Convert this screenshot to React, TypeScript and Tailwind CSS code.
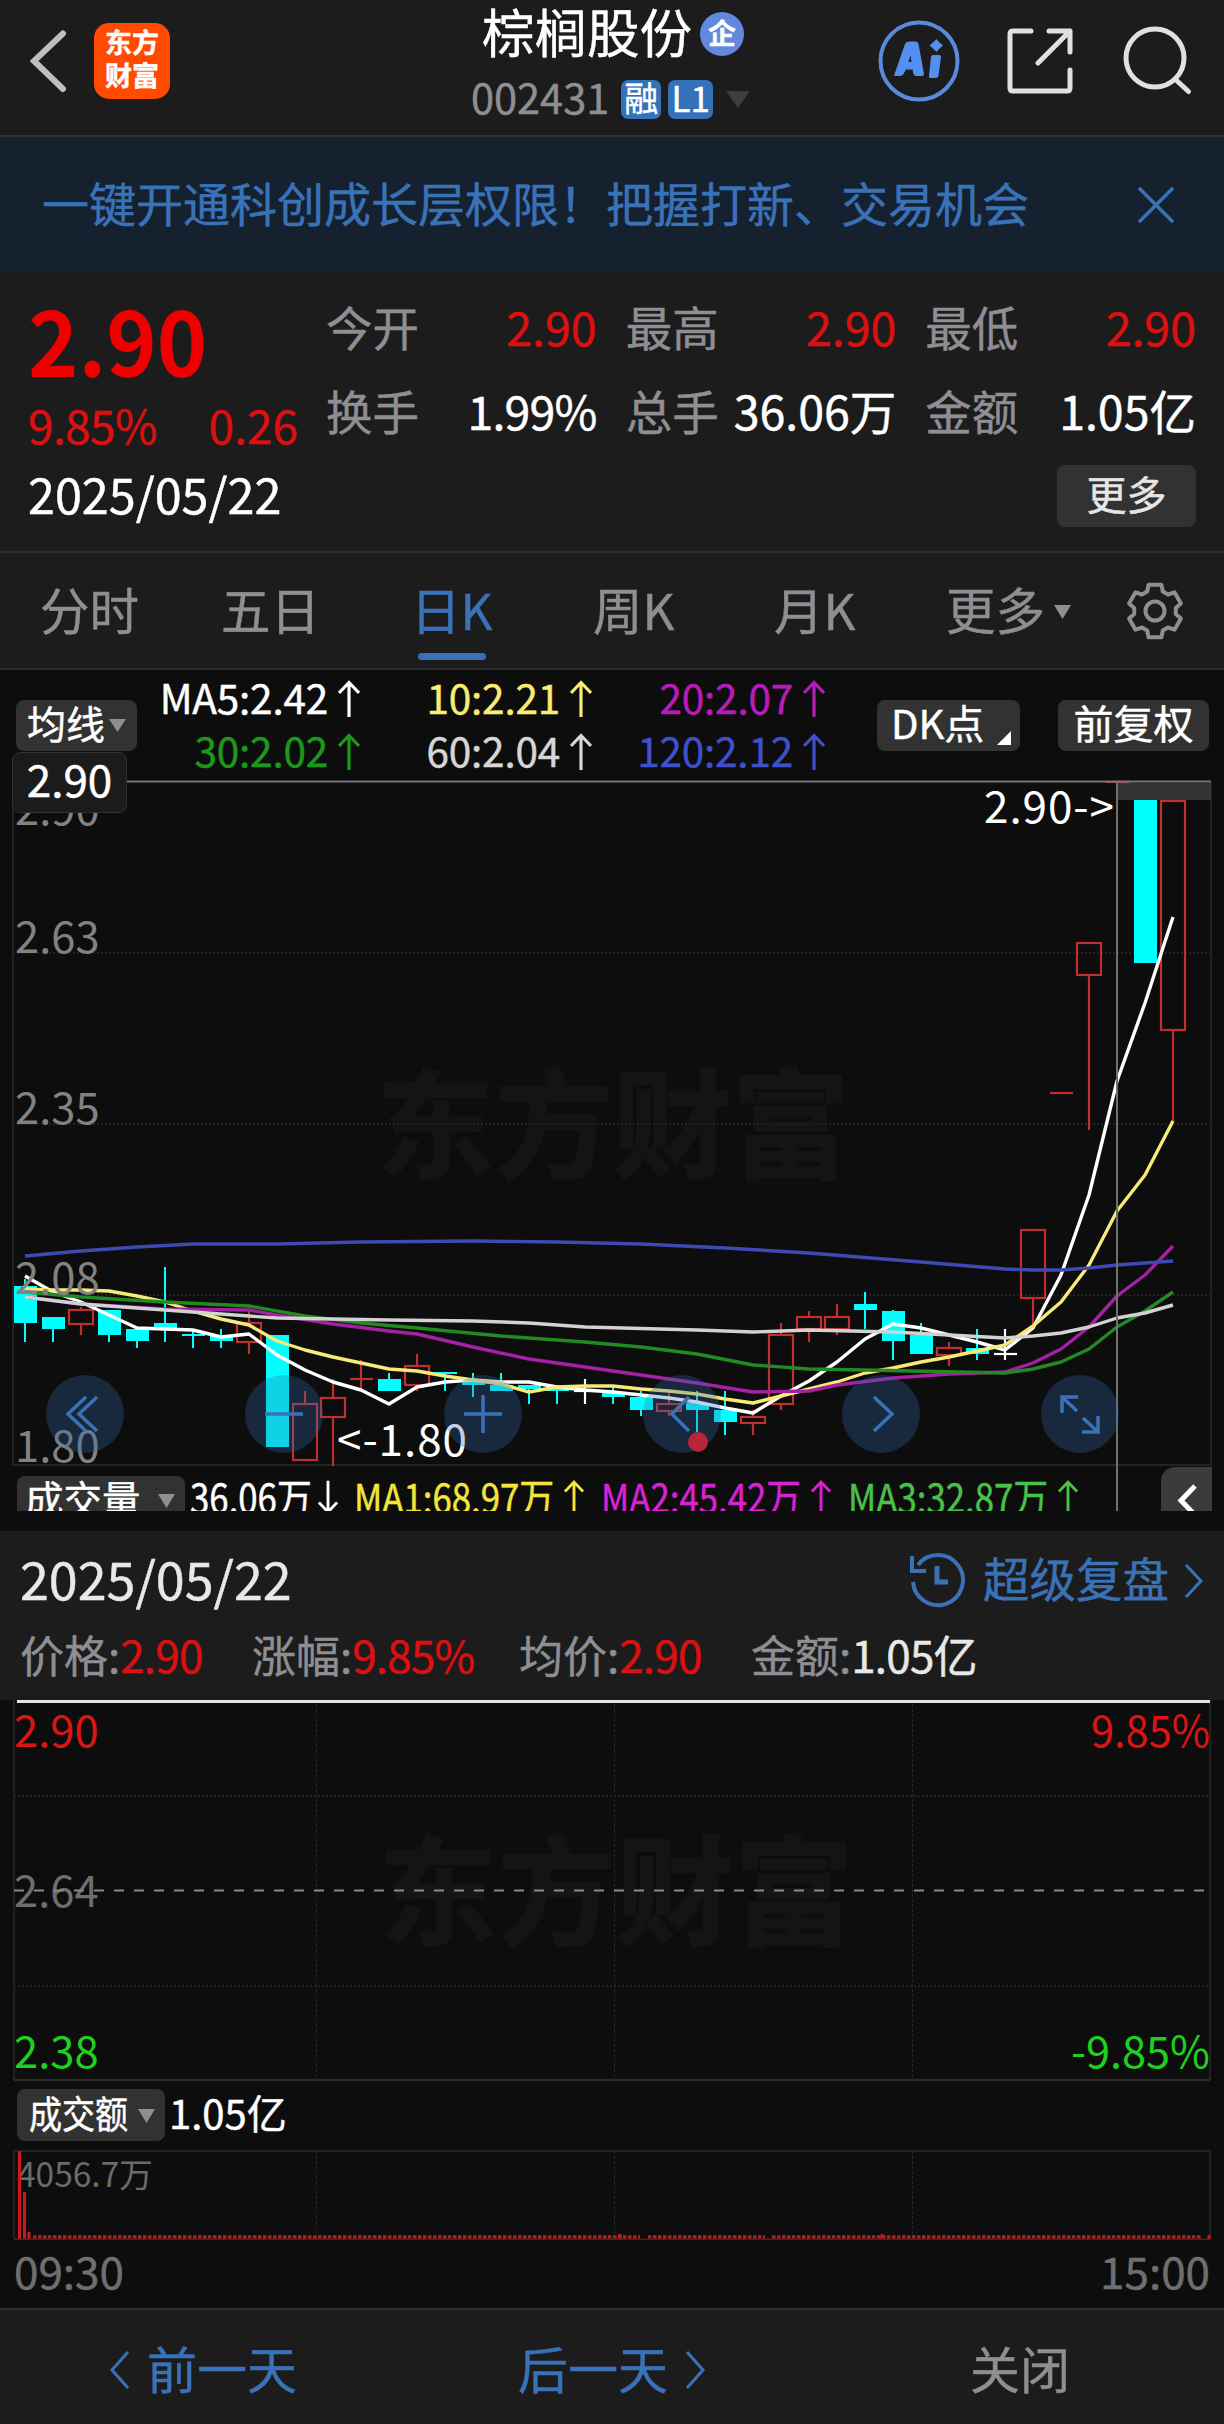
import React from "react";

const UP = "#c03030";
const DOWN = "#00ffff";

type Kind = "up" | "down" | "flat";
// [kind, high, bodyTop, bodyBottom, low]
const CANDLES: [Kind, number, number, number, number][] = [
  ["down", 1279, 1286, 1323, 1342],
  ["down", 1317, 1317, 1329, 1342],
  ["up", 1307, 1310, 1324, 1335],
  ["down", 1310, 1310, 1335, 1342],
  ["down", 1329, 1329, 1341, 1348],
  ["down", 1267, 1323, 1328, 1342],
  ["down", 1329, 1334, 1336, 1348],
  ["down", 1329, 1335, 1341, 1348],
  ["up", 1311, 1323, 1342, 1354],
  ["down", 1335, 1335, 1447, 1447],
  ["up", 1391, 1404, 1460, 1460],
  ["up", 1379, 1398, 1417, 1466],
  ["up", 1360, 1379, 1379, 1390],
  ["down", 1373, 1379, 1391, 1391],
  ["up", 1354, 1366, 1385, 1391],
  ["down", 1372, 1372, 1374, 1391],
  ["down", 1373, 1380, 1385, 1397],
  ["down", 1373, 1385, 1391, 1391],
  ["down", 1385, 1385, 1389, 1404],
  ["down", 1385, 1389, 1391, 1404],
  ["flat", 1379, 1391, 1391, 1404],
  ["down", 1385, 1392, 1397, 1404],
  ["down", 1391, 1397, 1410, 1416],
  ["up", 1391, 1404, 1411, 1416],
  ["down", 1391, 1403, 1410, 1432],
  ["down", 1391, 1410, 1422, 1435],
  ["up", 1410, 1417, 1423, 1435],
  ["up", 1323, 1335, 1404, 1410],
  ["up", 1311, 1317, 1329, 1342],
  ["up", 1304, 1317, 1329, 1335],
  ["down", 1292, 1304, 1310, 1329],
  ["down", 1310, 1311, 1341, 1360],
  ["down", 1323, 1335, 1354, 1354],
  ["up", 1342, 1348, 1355, 1366],
  ["down", 1329, 1348, 1354, 1360],
  ["flat", 1329, 1354, 1354, 1360],
  ["up", 1230, 1230, 1298, 1324],
  ["up", 1093, 1093, 1093, 1093],
  ["up", 943, 943, 975, 1130],
  ["up", 782, 782, 782, 782],
  ["down", 800, 800, 963, 963],
  ["up", 801, 801, 1030, 1121],
];

const cx = (i: number) => 25 + 28 * i;

const MA5 = [1276, 1292, 1302, 1315, 1328, 1329, 1330, 1337, 1334, 1355, 1370, 1382, 1390, 1404, 1387, 1382, 1380, 1382, 1382, 1387, 1390, 1392, 1395, 1398, 1402, 1408, 1413, 1396, 1381, 1362, 1339, 1324, 1328, 1335, 1342, 1350, 1328, 1275, 1195, 1081, 1003, 917].map((y, i) => [i, y]);
const MA10 = [1289, 1290, 1290, 1291, 1296, 1302, 1311, 1319, 1325, 1341, 1350, 1357, 1363, 1369, 1371, 1376, 1380, 1384, 1392, 1387, 1386, 1386, 1389, 1391, 1394, 1399, 1403, 1396, 1389, 1382, 1373, 1368, 1362, 1357, 1351, 1345, 1326, 1302, 1265, 1211, 1175, 1121].map((y, i) => [i, y]);
const MA20 = [[0, 1297], [2, 1304], [5, 1309], [8, 1310], [9, 1315], [11, 1324], [13, 1331], [14, 1334], [16, 1347], [18, 1359], [20, 1367], [22, 1375], [24, 1383], [26, 1392], [28, 1391], [29, 1385], [31, 1378], [33, 1374], [35, 1372], [36, 1363], [37, 1349], [38, 1327], [39, 1296], [40, 1275], [41, 1246]];
const MA30 = [[0, 1292], [2, 1297], [5, 1302], [8, 1306], [10, 1316], [12, 1323], [14, 1328], [17, 1336], [20, 1342], [22, 1347], [24, 1354], [26, 1365], [28, 1369], [30, 1370], [35, 1373], [36, 1369], [37, 1362], [38, 1349], [39, 1327], [40, 1311], [41, 1292]];
const MA60 = [[0, 1297], [2, 1304], [4, 1308], [6, 1312], [8, 1316], [9, 1318], [13, 1320], [16, 1321], [18, 1323], [20, 1327], [24, 1330], [26, 1332], [28, 1330], [31, 1332], [35, 1338], [36, 1336], [37, 1333], [38, 1327], [39, 1318], [40, 1313], [41, 1305]];
const MA120 = [[0, 1256], [2, 1251], [4, 1247], [6, 1244], [9, 1244], [12, 1242], [16, 1241], [19, 1242], [22, 1244], [25, 1248], [28, 1253], [32, 1262], [35, 1269], [36, 1270], [37, 1270], [38, 1268], [39, 1265], [40, 1263], [41, 1261]];

function MaLine({ data, color }: { data: number[][]; color: string }) {
  return (
    <polyline
      points={data.map(([i, y]) => `${cx(i)},${y}`).join(" ")}
      fill="none"
      stroke={color}
      strokeWidth={3.4}
      strokeLinejoin="round"
    />
  );
}

function Candle({ i, c }: { i: number; c: (typeof CANDLES)[number] }) {
  const [kind, high, top, bottom, low] = c;
  const x = cx(i);
  if (kind === "down") {
    return (
      <g fill={DOWN}>
        <rect x={x - 1} y={high} width={2} height={low - high} />
        <rect x={x - 11} y={top} width={23} height={bottom - top} />
      </g>
    );
  }
  const color = kind === "up" ? UP : "#ffffff";
  return (
    <g stroke={color} strokeWidth={2.2} fill="none">
      {high < top && <line x1={x} x2={x} y1={high} y2={top} />}
      {low > bottom && <line x1={x} x2={x} y1={bottom} y2={low} />}
      {bottom - top < 1 ? (
        <line x1={x - 11} x2={x + 12} y1={top} y2={top} />
      ) : (
        <rect x={x - 12} y={top} width={24} height={bottom - top} />
      )}
    </g>
  );
}

function Watermark({ x, y }: { x: number; y: number }) {
  return (
    <text x={x} y={y} fontSize={118} fontWeight={700} fill="#141414" stroke="#141414" strokeWidth={2} textLength={474} lengthAdjust="spacingAndGlyphs">
      东方财富
    </text>
  );
}

function Tri({ w = 16, h = 14, color = "#8f8f93" }: { w?: number; h?: number; color?: string }) {
  return (
    <svg width={w} height={h} viewBox="0 0 16 14" preserveAspectRatio="none" className="shrink-0">
      <path d="M0 0H16L8 14Z" fill={color} />
    </svg>
  );
}

function Arrow({ down = false }: { down?: boolean }) {
  return (
    <svg width="22" height="38" viewBox="0 0 22 38" fill="none" stroke="currentColor" strokeWidth="3.200" className={down ? "rotate-180" : ""}>
      <path d="M11 37V3M1 13L11 2.500L21 13" />
    </svg>
  );
}

function Ma({ text, className }: { text: string; className: string }) {
  return (
    <div className={`flex items-center justify-end gap-[10px] ${className}`}>
      <span className="-mt-1 whitespace-nowrap">{text}</span>
      <Arrow />
    </div>
  );
}

function VolMa({ text, down, className }: { text: string; down?: boolean; className: string }) {
  return (
    <div className={`flex shrink-0 items-start justify-between ${className}`}>
      <span className="mt-[8px] w-0 origin-left scale-x-[.87] whitespace-nowrap text-[40px] leading-[44px]">{text}</span>
      <span className="mt-[13px] block w-5 shrink-0">
        <svg width="20" height="36" viewBox="0 0 22 38" fill="none" stroke="currentColor" strokeWidth="3.200" className={down ? "rotate-180" : ""}>
          <path d="M11 37V3M1 13L11 2.500L21 13" />
        </svg>
      </span>
    </div>
  );
}

function Quote({ label, value, className }: { label: string; value: string; className: string }) {
  return (
    <div className="flex items-center justify-between">
      <span className="text-[46.500px] text-[#8e8e93]">{label}</span>
      <span className={className}>{value}</span>
    </div>
  );
}

function Stat({ label, value, className, color }: { label: string; value: string; className: string; color: string }) {
  return (
    <div className={`whitespace-nowrap ${className}`}>
      <span className="text-[#8e8e93]">{label}:</span>
      <span className={`tracking-[-0.8px] ${color}`}>{value}</span>
    </div>
  );
}

function Control({ children }: { children: React.ReactNode }) {
  return (
    <button className="flex size-[78px] items-center justify-center rounded-full bg-[rgba(50,105,175,0.3)]">
      <svg width="78" height="78" viewBox="-39 -39 78 78" fill="none" stroke="#3a72b8" strokeWidth="3.5">
        {children}
      </svg>
    </button>
  );
}

function gearPath() {
  const pts: string[] = [];
  for (let k = 0; k < 6; k++) {
    const a = (k * Math.PI) / 3 - Math.PI / 2;
    for (const [d, r] of [[-0.38, 21], [-0.24, 27], [0.24, 27], [0.38, 21]]) {
      pts.push(`${(Math.cos(a + d) * r).toFixed(2)} ${(Math.sin(a + d) * r).toFixed(2)}`);
    }
  }
  return `M${pts.join("L")}Z`;
}

function Header() {
  return (
    <header className="flex h-[137px] border-b-2 border-[#2f3233]">
      <svg width="40" height="64" viewBox="0 0 40 64" className="ml-[28px] mt-[29px]" fill="none" stroke="#bfbfbf" strokeWidth="6" strokeLinecap="round">
        <path d="M35 4.500L6 32L35 60" />
      </svg>
      <div className="ml-[26px] mt-[23px] flex size-[76px] flex-col items-center justify-center rounded-[15px] bg-[#ff4a00] pb-[7px] text-[27px] font-bold leading-[33px] text-white">
        <span>东方</span>
        <span>财富</span>
      </div>
      <div className="ml-[301px] flex w-[284px] flex-col">
        <div className="ml-[11px] mt-[3px] flex h-[54px] items-center">
          <span className="-mt-[1px] text-[52.500px] leading-[54px] text-white">棕榈股份</span>
          <span className="ml-[8px] mt-2 flex size-[44px] items-center justify-center rounded-full bg-[#6288e0] pb-[5px] text-[28px] font-bold leading-none text-white">企</span>
        </div>
        <div className="mt-[22px] flex h-[40px] items-center">
          <span className="-mt-1 text-[41.500px] leading-none text-[#8e8e93]">002431</span>
          <span className="ml-[12px] flex h-[39px] w-[40px] items-center justify-center rounded-[7px] bg-[#3571b8] pb-1 text-[34px] leading-none text-white">融</span>
          <span className="ml-[7px] flex h-[39px] w-[45px] items-center justify-center rounded-[7px] bg-[#3571b8] pb-[6px] text-[35px] leading-none text-white">L1</span>
          <span className="ml-[13px]"><Tri w={24} h={17} color="#3e3e3e" /></span>
        </div>
      </div>
      <svg width="348" height="130" viewBox="876 0 348 130" className="ml-[121px]" fill="none">
        <circle cx="919" cy="61" r="38.500" stroke="#5a8ade" strokeWidth="4" />
        <path d="M894 75.500L905 44Q906 41.500 909 41.500H915Q918 41.500 918.500 44L924 74Q924 76 922 76H916Q914 76 913.500 74L912.500 69.500H906L903.500 74Q902.500 76 900 76H895ZM908.500 62H911.500L910.500 55.500Z" fill="#528ff0" />
        <path d="M933 55H939Q941 55 941 57L938.500 76Q938 78 936 78H931Q928.500 78 929 76L931 57Q931.500 55 933 55Z" fill="#528ff0" />
        <path d="M936.500 39L939.500 42.500L943 45.500L939.500 48.500L936.500 52L933 48.500L929.500 45.500L933 42.500Z" fill="#528ff0" />
        <g stroke="#e0e0e0" strokeWidth="5" strokeLinecap="round" strokeLinejoin="round">
          <path d="M1031 31H1013Q1010 31 1010 34V88Q1010 91 1013 91H1067Q1070 91 1070 88V70M1049 31H1070V52M1070 31L1038 63" />
          <circle cx="1155" cy="58" r="29" />
          <path d="M1175 79L1188.500 91.500" />
        </g>
      </svg>
    </header>
  );
}

export default function App() {
  const tabs: [string, string][] = [
    ["分时", "w-[181px]"],
    ["五日", "w-[190px]"],
    ["日K", "w-[182px]"],
    ["周K", "w-[181px]"],
    ["月K", "w-[172px]"],
  ];
  return (
    <div className="h-[2424px] w-[1224px] overflow-hidden bg-[#0d0d0d] font-['Noto_Sans_CJK_SC',sans-serif] [-webkit-text-stroke-width:0.45px]">
      <div className="bg-[#1c1c1c]">
        <Header />

        <div className="flex h-[135px] items-center bg-[#15212e] pl-[42px] text-[#3a72b8]">
          <span className="-mt-[6px] w-[1096px] text-[47px] leading-none">一键开通科创成长层权限！把握打新、交易机会</span>
          <svg width="36" height="38" viewBox="0 0 36 38" fill="none" stroke="#3a72b8" strokeWidth="3.500">
            <path d="M1 2L35 36M35 2L1 36" />
          </svg>
        </div>

        <section className="flex h-[281px] flex-col border-b-2 border-[#2d2d2d] pl-[28px] pr-[28px]">
          <div className="flex h-[190px]">
            <div className="w-[299px] text-[46px] text-[#dc1010]">
              <div className="mt-[18px] h-[96px] origin-left scale-x-[.94] text-[91px] font-bold leading-[94px] text-[#ee0000] [-webkit-text-stroke-width:0px]">2.90</div>
              <div className="mt-[8px] flex w-[270px] justify-between leading-[60px]">
                <span className="tracking-[-0.6px]">9.85%</span>
                <span>0.26</span>
              </div>
            </div>
            <div className="mt-[12px] grid h-[168px] w-[870px] shrink-0 grid-cols-3 gap-x-[29px] whitespace-nowrap text-[46.500px]">
              <Quote label="今开" value="2.90" className="text-[#dc1010]" />
              <Quote label="最高" value="2.90" className="text-[#dc1010]" />
              <Quote label="最低" value="2.90" className="text-[#dc1010]" />
              <Quote label="换手" value="1.99%" className="tracking-[-0.8px] text-white" />
              <Quote label="总手" value="36.06万" className="text-white" />
              <Quote label="金额" value="1.05亿" className="text-white" />
            </div>
          </div>
          <div className="flex items-center justify-between">
            <span className="-mt-[3px] text-[48.500px] leading-[62px] text-white">2025/05/22</span>
            <button className="mt-[3px] flex h-[62px] w-[139px] items-center justify-center rounded-[8px] bg-[#323232] pb-[6px] text-[40px] leading-none text-[#e6e6e6]">更多</button>
          </div>
        </section>

        <nav className="flex h-[117px] border-b-2 border-[#2b2b2b] pl-[40px] text-[49.500px] text-[#8e8e93]">
          {tabs.map(([t, w]) => (
            <div key={t} className={`shrink-0 ${w}`}>
              <div className={t === "日K" ? "w-fit text-[#3a72b8]" : "w-fit"}>
                <div className="h-[100px] pt-[24px] leading-[64px]">{t}</div>
                {t === "日K" && <div className="ml-[7px] h-[7px] w-[68px] rounded-full bg-[#3a72b8]" />}
              </div>
            </div>
          ))}
          <div className="flex h-[100px] w-[179px] items-center gap-[9px]">
            <span className="mt-[12px] leading-[64px]">更多</span>
            <span className="mt-[17px]"><Tri w={17} h={14} /></span>
          </div>
          <svg width="60" height="60" viewBox="-30 -30 60 60" className="mt-[28px]" fill="none" stroke="#8e8e93" strokeWidth="4" strokeLinejoin="round">
            <path d={gearPath()} />
            <circle r="9.500" />
          </svg>
        </nav>
      </div>

      {/* Daily K-line chart */}
      <section className="relative h-[861px]">
        <div className="flex h-[112px] text-white">
          <button className="ml-[16px] mt-[30px] flex h-[51px] w-[121px] items-center rounded-[8px] bg-[#323232] pl-[11px] text-[39px] leading-none">
            <span className="-mt-[6px]">均线</span>
            <span className="ml-[4px]"><Tri w={17} h={13} /></span>
          </button>
          <div className="ml-[2px] mt-[2px] grid h-[106px] grid-cols-[221px_232px_233px] grid-rows-2 text-[40.500px] leading-[53px] tracking-[-0.2px]">
            <Ma text="MA5:2.42" className="text-white" />
            <Ma text="10:2.21" className="text-[#f8ec72]" />
            <Ma text="20:2.07" className="text-[#b81cb8]" />
            <Ma text="30:2.02" className="text-[#1c991c]" />
            <Ma text="60:2.04" className="text-[#d6d6d6]" />
            <Ma text="120:2.12" className="text-[#3e50cc]" />
          </div>
          <button className="ml-[52px] mt-[30px] flex h-[51px] w-[143px] rounded-[8px] bg-[#323232] pl-[14px] text-[40px] leading-[44px]">
            DK点
            <svg width="14" height="14" viewBox="0 0 14 14" className="ml-[13px] mt-[31px]"><path d="M14 0V14H0Z" fill="#fff" /></svg>
          </button>
          <button className="ml-[38px] mt-[30px] flex h-[51px] w-[151px] justify-center rounded-[8px] bg-[#323232] text-[40px] leading-[44px]">前复权</button>
        </div>

        <svg width="1224" height="684" viewBox="0 782 1224 684" className="block overflow-visible">
          <Watermark x={376} y={1169} />
          <g stroke="#232323" strokeWidth="2" fill="none">
            <path d="M13 782V1465H1211V782" />
            <path d="M13 953H1211M13 1124H1211M13 1295H1211" strokeDasharray="2 2" stroke="#222222" />
          </g>
          <rect x="1117" y="783" width="94" height="17" fill="#333333" />
          {CANDLES.map((c, i) => (
            <Candle key={i} i={i} c={c} />
          ))}
          <path d="M14 781.500H1211" stroke="#777777" strokeWidth="2" />
          <MaLine data={MA5} color="#ffffff" />
          <MaLine data={MA10} color="#f8ea78" />
          <MaLine data={MA20} color="#a421a4" />
          <MaLine data={MA30} color="#238a23" />
          <MaLine data={MA60} color="#d2d2d2" />
          <MaLine data={MA120} color="#3e4ab4" />
          <g fontSize="43.500" fill="#828282">
            <text x="15" y="825">2.90</text>
            <text x="15" y="953">2.63</text>
            <text x="15" y="1124">2.35</text>
            <text x="15" y="1294">2.08</text>
            <text x="15" y="1462">1.80</text>
          </g>
          <g fontSize="44" fill="#ffffff">
            <text x="984" y="823" textLength="130">2.90-&gt;</text>
            <text x="337" y="1456" textLength="130">&lt;-1.80</text>
          </g>
          <path d="M1117 782V1511" stroke="#707070" strokeWidth="2" />
        </svg>

        <div className="absolute left-[12px] top-[82px] flex h-[61px] w-[115px] items-center justify-center rounded-[8px] border border-[#303030] bg-[#1b1b1b] pb-[10px] text-[44px] leading-none text-white">2.90</div>

        <div className="absolute left-[46px] top-[705px] flex gap-[121px]">
          <Control><path d="M1 -17L-17 0L1 17M12 -17L-6 0L12 17" /></Control>
          <Control><path d="M-19 0H19" /></Control>
          <Control><path d="M-19 0H19M0 -19V19" /></Control>
          <Control>
            <path d="M7 -17L-10 0L7 17" />
            <circle cx="16" cy="28" r="10" fill="#b8253a" stroke="none" />
          </Control>
          <Control><path d="M-7 -17L11 0L-7 17" /></Control>
          <Control><path d="M-18 -1V-17H-2M-18 -17L-3 -3M18 2V18H2M18 18L3 4" /></Control>
        </div>

        <div className="flex h-[45px] overflow-hidden">
          <div className="ml-[17px] mt-[10px] flex h-[52px] w-[168px] shrink-0 rounded-[8px] bg-[#323232] pl-[8px] text-[38.500px] leading-[42px] text-white">
            成交量
            <span className="ml-[17px] mt-[18px]"><Tri w={17} h={14} /></span>
          </div>
          <VolMa text="36.06万" down className="ml-[5px] w-[148px] text-white" />
          <VolMa text="MA1:68.97万" className="ml-[16px] w-[230px] text-[#f3e63a]" />
          <VolMa text="MA2:45.42万" className="ml-[17px] w-[230px] text-[#d822d2]" />
          <VolMa text="MA3:32.87万" className="ml-[17px] w-[230px] text-[#4bc04b]" />
          <div className="ml-[83px] mt-px h-[60px] w-[51px] shrink-0 rounded-tl-[14px] bg-[#3b3b3b]">
            <svg width="51" height="60" viewBox="0 0 51 60" fill="none" stroke="#fff" strokeWidth="5">
              <path d="M34 19L20 33.500L34 48" />
            </svg>
          </div>
        </div>
      </section>

      {/* Intraday replay panel */}
      <section className="h-[169px] bg-[#1c1c1c] pl-[20px]">
        <div className="flex h-[96px] items-center">
          <span className="-mt-[3px] w-[886px] text-[52px] leading-none text-[#e8e8e8]">2025/05/22</span>
          <svg width="62" height="60" viewBox="-31 -30 62 60" className="mt-[2px]" fill="none" stroke="#3a72b8" strokeWidth="4">
            <path d="M-24 2A25 25 0 1 0 -19 -15" />
            <path d="M-25 -24V-9H-11" />
            <path d="M0 -14V2H11" strokeWidth="5" />
          </svg>
          <span className="-mt-1 ml-[15px] text-[46.500px] leading-none text-[#3a72b8]">超级复盘</span>
          <svg width="20" height="36" viewBox="0 0 20 36" className="ml-[15px] mt-1" fill="none" stroke="#3a72b8" strokeWidth="3">
            <path d="M2 2L17 18L2 34" />
          </svg>
        </div>
        <div className="flex text-[44px] leading-[54px]">
          <Stat label="价格" value="2.90" className="w-[232px]" color="text-[#dc1010]" />
          <Stat label="涨幅" value="9.85%" className="w-[267px]" color="text-[#dc1010]" />
          <Stat label="均价" value="2.90" className="w-[232px]" color="text-[#dc1010]" />
          <Stat label="金额" value="1.05亿" className="" color="text-[#e8e8e8]" />
        </div>
      </section>

      <svg width="1224" height="382" viewBox="0 1700 1224 382" className="block">
        <Watermark x={379} y={1936} />
        <path d="M14 1700V2080M1210 1700V2080" stroke="#222" strokeWidth="2" />
        <path d="M14 1796H1210M14 1986H1210" stroke="#222" strokeWidth="2" strokeDasharray="2 2" />
        <path d="M316.500 1704V2080M614.500 1704V2080M912.500 1704V2080" stroke="#262626" strokeWidth="1" strokeDasharray="3 2" />
        <path d="M14 2080H1210" stroke="#2b2b2b" strokeWidth="2.500" />
        <path d="M17 1701.500H1210" stroke="#e6e6dc" strokeWidth="3" />
        <g fontSize="43.500">
          <text x="14" y="1747" fill="#dc1414">2.90</text>
          <text x="1210" y="1747" fill="#dc1414" textAnchor="end" textLength="119" lengthAdjust="spacingAndGlyphs">9.85%</text>
          <text x="14" y="1907" fill="#6e6e6e">2.64</text>
          <text x="14" y="2068" fill="#1fd01f">2.38</text>
          <text x="1210" y="2068" fill="#1fd01f" textAnchor="end" textLength="139" lengthAdjust="spacingAndGlyphs">-9.85%</text>
        </g>
        <path d="M14 1890.500H1206" stroke="#8a8a8a" strokeWidth="2" strokeDasharray="10 10" />
      </svg>

      <div className="flex h-[68px] text-white">
        <button className="ml-[17px] mt-[7px] flex h-[52px] w-[148px] rounded-[8px] bg-[#323232] pl-[12px] text-left text-[38px] leading-[45px]">
          <span className="w-[100px] origin-left scale-x-[.87] whitespace-nowrap">成交额</span>
          <span className="ml-[9px] mt-[20px]"><Tri w={17} h={14} /></span>
        </button>
        <span className="ml-[4px] mt-[6px] text-[40px] leading-[48px]">1.05亿</span>
      </div>

      <svg width="1224" height="90" viewBox="0 2150 1224 90" className="block">
        <path d="M14 2239V2151H1210V2239" fill="none" stroke="#222" strokeWidth="2" />
        <path d="M316.500 2151V2239M614.500 2151V2239M912.500 2151V2239" stroke="#262626" strokeWidth="1" strokeDasharray="3 2" />
        <text x="17" y="2187" fontSize="33.500" fill="#6b6b6b">4056.7万</text>
        <path d="M19.500 2151V2239M24.500 2192V2239M29 2232V2239M620 2234V2239M882 2234V2239M1209 2235V2239" stroke="#d01616" strokeWidth="3" />
        <path d="M33 2237H640M648 2237H765M772 2237H1202" stroke="#b02222" strokeWidth="3.500" strokeDasharray="3.500 1.500" />
        <path d="M14 2239.300H1210" stroke="#6a1515" strokeWidth="1.500" />
      </svg>

      <div className="flex h-[68px] justify-between px-[14px] pt-[2px] text-[44px] leading-[56px] text-[#6f6f6f]">
        <span>09:30</span>
        <span>15:00</span>
      </div>

      <footer className="flex h-[116px] items-center border-t-2 border-[#2f2f2f] bg-[#1c1c1c] pl-[109px] text-[50px] leading-none text-[#3a72b8]">
        <svg width="22" height="40" viewBox="0 0 22 40" fill="none" stroke="#3a72b8" strokeWidth="3" className="mt-[6px]">
          <path d="M19 2L3 20L19 38" />
        </svg>
        <span className="ml-[16px] w-[371px]">前一天</span>
        <span>后一天</span>
        <svg width="22" height="40" viewBox="0 0 22 40" fill="none" stroke="#3a72b8" strokeWidth="3" className="ml-[16px] mt-[6px]">
          <path d="M3 2L19 20L3 38" />
        </svg>
        <span className="ml-[264px] text-[#8e8e93]">关闭</span>
      </footer>
    </div>
  );
}
